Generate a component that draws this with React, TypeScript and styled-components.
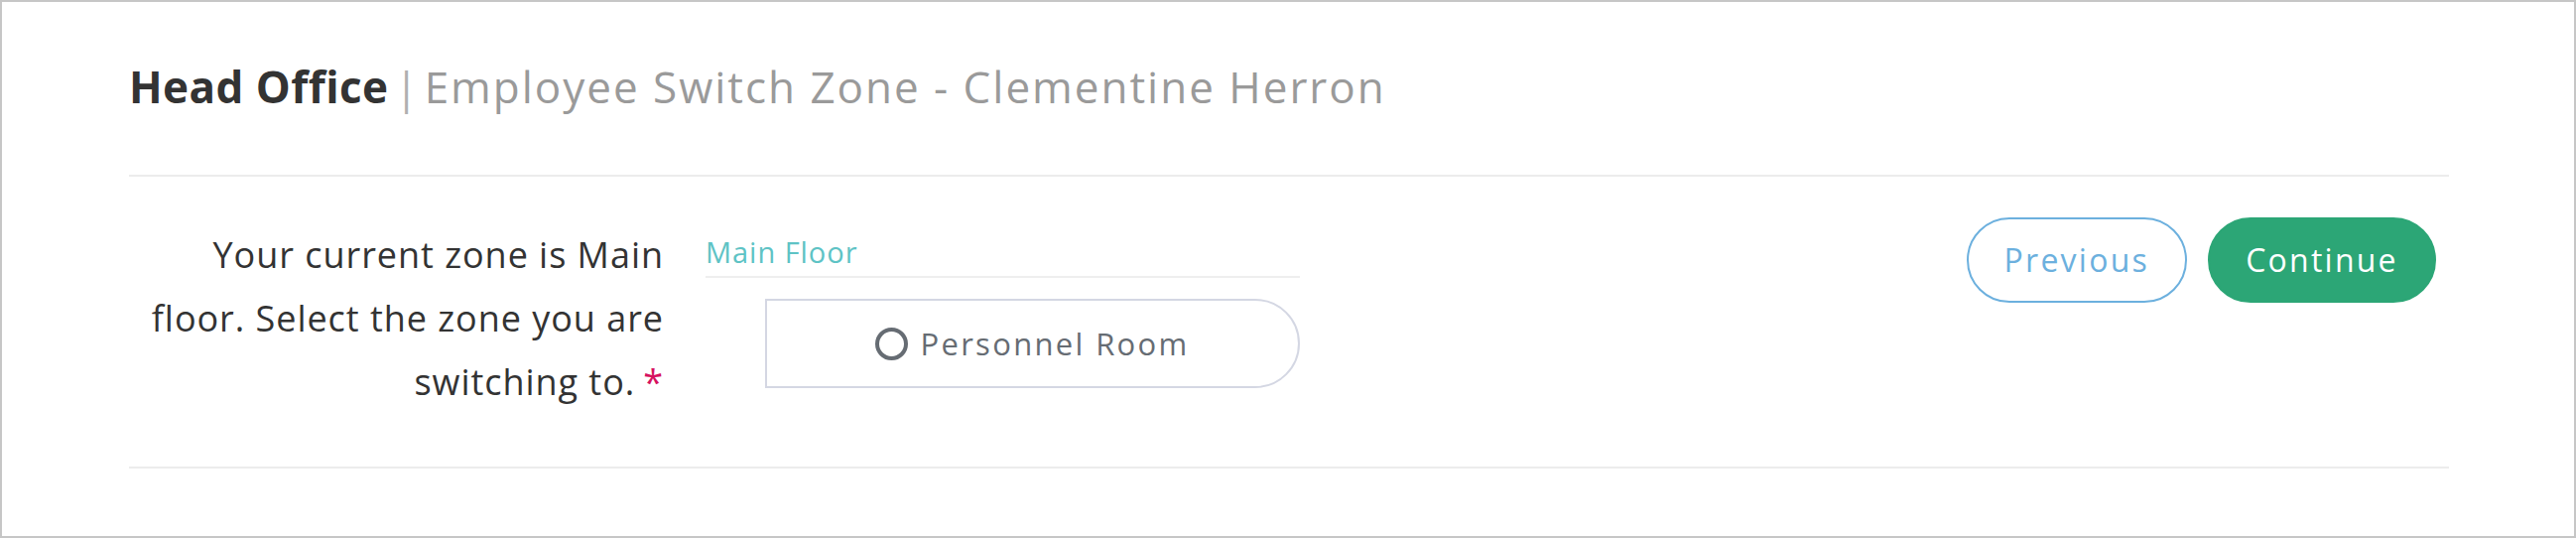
import styled, { createGlobalStyle } from 'styled-components';

const GlobalStyle = createGlobalStyle`
  html, body {
    margin: 0;
    padding: 0;
    background: #ffffff;
  }
  * {
    box-sizing: border-box;
  }
`;

const Page = styled.div`
  width: 100%;
  height: 542px;
  border: 2px solid #c6c6c6;
  background: #ffffff;
  padding: 0 126px 0 128px;
  font-family: 'Open Sans', 'Noto Sans', sans-serif;
  letter-spacing: 0.06em;
`;

const Header = styled.h1`
  margin: 0;
  padding: 59px 0 62px;
  font-size: 44px;
  line-height: 1.2;
  font-weight: 400;
  color: #9a9a9a;
  letter-spacing: 0.045em;
  border-bottom: 2px solid #ececec;
  .office {
    font-weight: 700;
    color: #333333;
    letter-spacing: 0.01em;
  }
  .divider {
    color: #b0b0b0;
    margin: 0 4px 0 6px;
  }
`;

const FormRow = styled.div`
  display: flex;
  align-items: flex-start;
  padding: 43px 13px 53px 0;
  border-bottom: 2px solid #ececec;
`;

const Label = styled.div`
  width: 539px;
  flex-shrink: 0;
  padding-top: 4px;
  text-align: right;
  font-size: 36px;
  line-height: 64px;
  color: #333333;
  .required {
    color: #d6115f;
    margin-left: 8px;
  }
`;

const Field = styled.div`
  width: 599px;
  margin-left: 42px;
  display: flex;
  flex-direction: column;
`;

const CurrentZone = styled.div`
  padding: 15px 0 6px 0;
  font-size: 29px;
  line-height: 36px;
  color: #5ec3c5;
  border-bottom: 2px solid #eeeeee;
`;

const Options = styled.div`
  display: flex;
  margin: 21px 0 0 60px;
`;

const OptionButton = styled.button`
  flex: 1;
  height: 90px;
  display: flex;
  align-items: center;
  justify-content: center;
  gap: 12px;
  background: #ffffff;
  border: 2px solid #d4d7e3;
  border-radius: 0 45px 45px 0;
  font-family: inherit;
  letter-spacing: 0.075em;
  font-size: 31px;
  color: #666c73;
  cursor: pointer;
`;

const Radio = styled.span`
  width: 33px;
  height: 33px;
  border-radius: 50%;
  border: 4px solid #666c73;
  margin-top: 2px;
`;

const Actions = styled.div`
  margin-left: auto;
  display: flex;
  gap: 21px;
  margin-top: -2px;
`;

const PillButton = styled.button<{ $primary?: boolean }>`
  height: 86px;
  padding: 0 36px;
  border-radius: 43px;
  font-family: inherit;
  letter-spacing: 0.07em;
  font-size: 32px;
  cursor: pointer;
  border: 2px solid ${p => (p.$primary ? '#2ca676' : '#6cb0de')};
  background: ${p => (p.$primary ? '#2ca676' : '#ffffff')};
  color: ${p => (p.$primary ? '#ffffff' : '#6cb0de')};
  min-width: ${p => (p.$primary ? '230px' : '221px')};
`;

const App = () => {
  return (
    <>
      <GlobalStyle />
      <Page>
        <Header>
          <span className="office">Head Office</span>
          <span className="divider">|</span>
          Employee Switch Zone - Clementine Herron
        </Header>
        <FormRow>
          <Label>
            Your current zone is Main floor. Select the zone you are switching to.
            <span className="required">*</span>
          </Label>
          <Field>
            <CurrentZone>Main Floor</CurrentZone>
            <Options>
              <OptionButton type="button">
                <Radio />
                Personnel Room
              </OptionButton>
            </Options>
          </Field>
          <Actions>
            <PillButton type="button">Previous</PillButton>
            <PillButton type="button" $primary>
              Continue
            </PillButton>
          </Actions>
        </FormRow>
      </Page>
    </>
  );
};

export default App;
